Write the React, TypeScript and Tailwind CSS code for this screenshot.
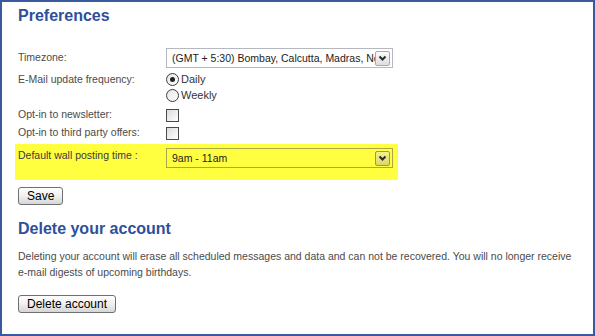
import React from "react"

const FONT = "font-['Liberation_Sans',Arial,sans-serif]"

function Arrow({ yellow = false }: { yellow?: boolean }) {
  return (
    <span
      className={`flex items-center justify-center w-[15px] h-[15px] rounded-[2px] border ${
        yellow
          ? "border-[#9c9c3c] bg-gradient-to-b from-[#f2f28c] to-[#d8d86a]"
          : "border-[#a9a9a9] bg-gradient-to-b from-[#fbfbfb] to-[#dedede]"
      }`}
    >
      <svg width="9" height="7" viewBox="0 0 9 7">
        <polyline points="1.5,1.5 4.5,4.5 7.5,1.5" fill="none" stroke="#2b2b2b" strokeWidth="2" />
      </svg>
    </span>
  )
}

function Select({ value, yellow = false }: { value: string; yellow?: boolean }) {
  return (
    <div
      className={`flex items-center w-[227px] h-[20px] border pl-[5px] pr-[2px] ${
        yellow ? "border-[#a8a848] bg-[#ffff40]" : "border-[#b5b8c0] bg-white"
      }`}
    >
      <div className="flex-1 overflow-hidden whitespace-nowrap text-[10.5px] text-[#222] leading-4">{value}</div>
      <Arrow yellow={yellow} />
    </div>
  )
}

function Radio({ checked = false, label }: { checked?: boolean; label: string }) {
  return (
    <div className="flex items-center h-4 gap-[2px]">
      <span className="flex items-center justify-center w-[13px] h-[13px] rounded-full border border-[#3a3a3a] bg-gradient-to-br from-[#e6e6e6] to-white">
        {checked && <span className="w-[5px] h-[5px] rounded-full bg-[#222]" />}
      </span>
      <span className="text-[11px] text-[#333]">{label}</span>
    </div>
  )
}

function Checkbox() {
  return (
    <span className="block w-[13px] h-[13px] border border-[#4a4a4a] bg-gradient-to-br from-[#dcdcdc] to-white" />
  )
}

function Button({ children }: { children: React.ReactNode }) {
  return (
    <button className="h-[18px] px-2 border border-[#707070] rounded-[3px] bg-gradient-to-b from-white via-[#f0f0f0] to-[#d6d6d6] text-[12px] leading-4 text-black">
      {children}
    </button>
  )
}

export default function App() {
  return (
    <div className={`${FONT} w-[595px] h-[336px] border-2 border-[#3a5a9e] bg-white overflow-hidden`}>
      <div className="flex flex-col pl-4 pt-1 text-[10.5px] text-[#4b4b4b]">
        <h2 className="h-5 text-[16px] leading-5 font-bold text-[#2e4f9b]">Preferences</h2>

        <div className="flex items-center h-5 mt-[22px]">
          <div className="w-[148px]">Timezone:</div>
          <Select value="(GMT + 5:30) Bombay, Calcutta, Madras, New Delhi" />
        </div>

        <div className="flex mt-[3px]">
          <div className="w-[148px] h-4 leading-4">E-Mail update frequency:</div>
          <div className="flex flex-col">
            <Radio checked label="Daily" />
            <Radio label="Weekly" />
          </div>
        </div>

        <div className="flex items-center h-[18px] mt-[3px]">
          <div className="w-[148px]">Opt-in to newsletter:</div>
          <Checkbox />
        </div>

        <div className="flex items-center h-[18px]">
          <div className="w-[148px]">Opt-in to third party offers:</div>
          <Checkbox />
        </div>

        <div className="flex w-[383px] h-[36px] -ml-[3px] mt-[2px] pl-[3px] pt-1 bg-[#ffff40]">
          <div className="w-[148px] leading-[14px] text-[#3a3a3a]">Default wall posting time :</div>
          <Select value="9am - 11am" yellow />
        </div>

        <div className="mt-[7px]">
          <Button>Save</Button>
        </div>

        <h2 className="h-5 mt-[14px] text-[16px] leading-5 font-bold text-[#2e4f9b]">Delete your account</h2>

        <p className="w-[572px] mt-[9px] leading-4">
          Deleting your account will erase all scheduled messages and data and can not be recovered. You will no longer
          receive <span className="whitespace-nowrap">e-mail</span> digests of upcoming birthdays.
        </p>

        <div className="mt-[15px]">
          <Button>Delete account</Button>
        </div>
      </div>
    </div>
  )
}
